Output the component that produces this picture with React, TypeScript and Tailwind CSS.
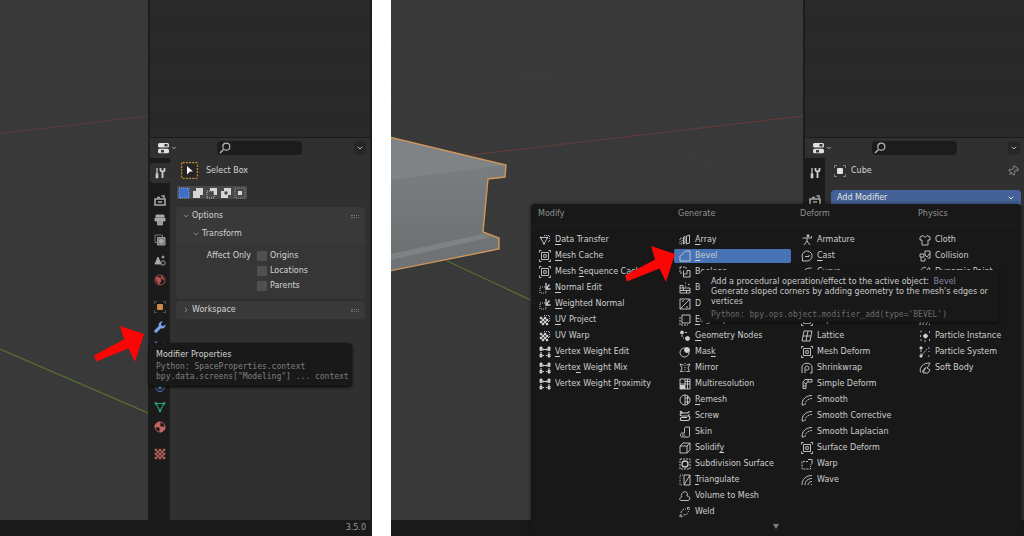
import React, { useState } from 'react';
import { ChevronDown, ChevronRight, Pin } from 'lucide-react';

const ICONS: Record<string, React.ReactNode> = {
  transfer: <><path d="M1.5 3.5h7L5 10z" /><path d="M5 1.5h5.5v6H9" strokeDasharray="1 1" /><path d="M.8 2.8h1.5v1.5H.8zM7.6 2.8h1.5v1.5H7.6zM4.2 9h1.6v1.6H4.2z" fill="currentColor" stroke="none" /></>,
  cache: <><path d="M2.5 2.5h7v7h-7zM4.7 4.7h2.6v2.6H4.7z" /><path d="M.5 2.5v-2h2M9.5.5h2v2M11.5 9.5v2h-2M2.5 11.5h-2v-2" /></>,
  normal: <><path d="M6 5H1v6h6V7.5" strokeDasharray="1 1" /><path d="M7 1v6h4.500M7 7l3.500-4.500" strokeWidth="1.300" /></>,
  uv: <><path d="M5 1.5h5.5v6H9" strokeDasharray="1 1" /><path d="M1 3h2v2H1zM5 3h2v2H5zM3 5h2v2H3zM7 5h2v2H7zM1 7h2v2H1zM5 7h2v2H5zM3 9h2v2H3zM7 9h2v2H7z" fill="currentColor" strokeWidth=".4" /></>,
  weight: <><path d="M1 1h2v3.500H1zM9 1h2v3.500H9zM1 8h2v3H1zM9 8h2v3H9z" fill="currentColor" /><path d="M3.500 3.500h5M4 2.500v2M8 2.500v2M2 6v1M10 6v1M4 9.500h1M7 9.500h1" strokeWidth="1.200" /></>,
  array: <><path d="M7.500 2l3-1v8l-3 1zM4.500 3l1.500-.5v7l-1.500.5z" /><path d="M1 4h2v6H1z" strokeDasharray="1 1" /></>,
  bevel: <path d="M1 11V6.5L6.500 1H11v10z" />,
  boolean: <><path d="M1 1h6v3M1 1v6h3" strokeDasharray="2 1" /><path d="M4.500 4.500V11H11V4.500H8V8H4.500" /></>,
  build: <><path d="M1 6h10v5H1zM1 8.500h10M4.500 6v2.500M7.500 8.500V11M1 6V3.500h3V6" /><path d="M6 1h1M9 2.500h1.500M6 4h1" /></>,
  decimate: <path d="M1 1h10v10H1zM1 11L11 1M3 3h2M7 9h2" />,
  edge: <><path d="M3 1h8v8H3z" /><path d="M1 3v8h8" strokeDasharray="2 1" /></>,
  nodes: <><circle cx="3" cy="2.500" r="1.500" fill="currentColor" /><circle cx="8.500" cy="8.500" r="2" fill="currentColor" /><path d="M2 6h2M6 2.500h2M4 8h1" /></>,
  mask: <><circle cx="5.500" cy="6.500" r="4.500" /><circle cx="8" cy="4" r="2.500" fill="currentColor" /></>,
  mirror: <><path d="M6 1v10" strokeDasharray="1 1" /><path d="M4.500 9.500h-3L3 6 1 2l3.500 1M7.500 3L11 2 9 6l1.500 3.500h-3" /></>,
  multires: <><path d="M1 1h10v10H1zM6 1v10M1 6h10M8.500 1v10M6 3.500h5" /><path d="M1 7h5v4H1z" fill="currentColor" stroke="none" /></>,
  remesh: <><circle cx="6" cy="6" r="5" /><path d="M6 1v10M6 4h4.500M6 8h4.500M8.500 2v8" /></>,
  screw: <path d="M10.500 1.500l-2 1.500H3C.5 1.500 1 .8 2 1.500l2 2M3 3c-2.500 0-2.500 3 0 3h6c2.500 0 2.500 4 0 4.500H3c-2.500 0-2-3 0-3h5M10.500 4L9 6" strokeWidth="1.100" />,
  skin: <path d="M7 1h3.500v8.500c0 1-.5 1.500-1.500 1.500H3C1 11 1 7 3 7h2.500V3c0-1.200.5-2 1.500-2zM3 9h3" />,
  solidify: <path d="M1 4h7v7H1zM1 4l3-3h7v7l-3 3M8 4l3-3" />,
  subdiv: <><path d="M1 1h10v10H1z" strokeDasharray="2 1" /><circle cx="6" cy="6" r="3" strokeWidth="1.300" /></>,
  triangulate: <><path d="M5 1h6v10H5zM5 11l6-10" /><path d="M4 1H1v10h3" strokeDasharray="1 1" /></>,
  volume: <path d="M2 10.500c-2-.5-1.500-3 .5-3.500C1.500 2 7 0 8.500 3.500L8 6c3 0 4 4 1 4.500z" />,
  weld: <path d="M1 9h2v2H1zM8.500 1.500h2v2h-2zM4.500 9c3 0 5-2 5-4M2 7c0-2 2-4 5-4" strokeDasharray="2 1" />,
  armature: <><circle cx="7" cy="1.800" r="1" fill="currentColor" /><path d="M1.500 4h9M6 4v3L3 11M6 7l3 4M10.500 4V2" /></>,
  cast: <path d="M1.500 8A5 5 0 116 11H1.500V8zM4 6.500h4V5" />,
  curve: <path d="M1.500 10C1 4 5 2 10.500 2M4 10c0-3 2-5 6.500-5" />,
  lattice: <path d="M3 1h8l-2 10H1zM7 1L5 11M2 6h8" />,
  shrink: <><path d="M1 11V5c0-5 10-5 10 0v6H9" /><path d="M4 11V6c0-2.500 4-2.500 4 0s-2 2-3 2" /></>,
  simple: <path d="M2 10.500V4L4 1.500h7V4H6.500L5 6v4.500zM5 6L3 4.500M7 1.500V4M2 8h3" />,
  smooth: <><path d="M1 11C1 5 5 1.500 11 1.500" /><path d="M4 11c0-3.500 2-6 7-6.500M1 11h3" strokeDasharray="2 1" /></>,
  warp: <><path d="M7 3.500H1V11h8.500V8" strokeDasharray="2 1" /><path d="M7 1.500h4v4L9.500 7" /></>,
  wave: <path d="M1 11C1 5 5 1.500 11 1.500M4 11c0-4 3-6.500 7-6.500M7 11c0-2 1.500-3.500 4-3.500M10 10.500h1" />,
  cloth: <path d="M4 1.500L1 3v3h2v5h6V6h2V3L8 1.500C7.500 3.500 4.500 3.500 4 1.500z" />,
  collision: <path d="M1 4h4v3H1zM2 7v4h4V8M6 1h5v7H8.500M6 1v4l2 2 3-4" />,
  paint: <path d="M1 11c0-3 1-4 4-4l5-5.500L11 3 7 8c0 2-2 3-6 3zM2 5c0-3 3-4 5-3.500" />,
  instance: <><path d="M4 6h5M6.500 3.500v5M5 4.500l3 3M8 4.500l-3 3" strokeWidth="1.400" /><path d="M1.500 1.500h1M1 6h1M1.500 10h1M10 2h1M10 10h1M5.500 11h1" strokeWidth="1.500" /></>,
  particles: <><path d="M1 1h2v2H1zM1 9h2v2H1zM9.500 5.500h1M9 10h1.500M9 2h1.500" fill="currentColor" /><path d="M3 9l5-6M2 4v4" strokeDasharray="2 1" /></>,
  soft: <path d="M1.500 10.500C0 5 4 1 11 1c-1 2-2 4-3 5l3 2-2 3H4L7 5M3 10l3-4" />,
  tool: <><path d="M3 1v5" strokeWidth="1.200" /><path d="M2.500 7h1v3.500h-1z" strokeWidth="1.600" /><path d="M6.500 1v2c0 2 4 2 4 0V1M8.500 4.500V11" strokeWidth="1.800" /></>,
  render: <><path d="M1 5h10v6H1z" strokeWidth="1.600" /><path d="M3 3.500h3M7.500 2h2.500v2M4 8h4" strokeWidth="1.500" /></>,
  output: <><path d="M2 1h8v2H2zM1 4h10v3H1z" fill="currentColor" /><path d="M3.500 7v4h5V7" fill="#999" /></>,
  layers: <><path d="M1 1h7.500v7.500H1z" opacity=".7" /><path d="M3.500 3.500H11V11H3.500z" fill="#777" /><circle cx="7.200" cy="7.200" r="2" fill="currentColor" /></>,
  scene: <><path d="M1 10L4 3l3 7z" fill="currentColor" /><circle cx="9" cy="9" r="2.200" /><circle cx="9" cy="3" r="1" fill="currentColor" /></>,
  world: <><circle cx="6" cy="6" r="5" /><path d="M2 3l4 1 1 3-2 3-2-3zM8 1.500L7 4l3 2" fill="currentColor" /></>,
  object: <><path d="M3.500 3.500h5v5h-5z" fill="currentColor" /><path d="M.5 3V.5H3M9 .5h2.500V3M11.500 9v2.500H9M3 11.500H.5V9" opacity=".5" /></>,
  wrench: <path d="M8.800.7a3.300 3.300 0 00-4 4.300L.8 9a1.500 1.500 0 002.200 2.200l4-4a3.300 3.300 0 004.300-4L9.300 5.200 7.500 4.500 6.800 2.700z" fill="currentColor" stroke="none" />,
  physics: <><circle cx="6" cy="6" r="4.500" /><circle cx="6" cy="6" r="2" fill="currentColor" /></>,
  mesh: <><path d="M2 2.500h8L6 10z" strokeWidth="1.200" /><path d="M.8 1.300h2.400v2.400H.8zM8.800 1.300h2.400v2.400H8.800zM4.800 8.600h2.400V11H4.800z" fill="currentColor" stroke="none" /></>,
  material: <><circle cx="6" cy="6" r="5" /><path d="M6 1v5H1a5 5 0 015-5zM6 6h5a5 5 0 01-5 5z" fill="currentColor" /></>,
  texture: <path d="M1 1h2v2H1zM5 1h2v2H5zM9 1h2v2H9zM3 3h2v2H3zM7 3h2v2H7zM1 5h2v2H1zM5 5h2v2H5zM9 5h2v2H9zM3 7h2v2H3zM7 7h2v2H7zM1 9h2v2H1zM5 9h2v2H5zM9 9h2v2H9z" fill="currentColor" strokeWidth=".5" />,
  search: <><circle cx="7.300" cy="4.700" r="3.500" strokeWidth="1.200" /><path d="M4.500 7.500L1 11" strokeWidth="1.500" /></>,
};

function Icon({ name }: { name: string }) {
  return (
    <svg viewBox="0 0 12 12" className="size-3 shrink-0" fill="none" stroke="currentColor" strokeWidth="0.9" aria-hidden="true">
      {ICONS[name]}
    </svg>
  );
}

// An underscore marks the shortcut letter of a menu entry
const MENU = [
  {
    title: 'Modify',
    items: [
      ['transfer', '_Data Transfer'], ['cache', '_Mesh Cache'], ['cache', 'Mesh _Sequence Cache'],
      ['normal', '_Normal Edit'], ['normal', '_Weighted Normal'], ['uv', '_UV Project'], ['uv', 'UV Warp'],
      ['weight', '_Vertex Weight Edit'], ['weight', 'Verte_x Weight Mix'], ['weight', 'Vertex Weight _Proximity'],
    ],
  },
  {
    title: 'Generate',
    items: [
      ['array', '_Array'], ['bevel', '_Bevel'], ['boolean', 'Boolean'], ['build', 'Build'], ['decimate', 'Decimate'],
      ['edge', '_Edge Split'], ['nodes', '_Geometry Nodes'], ['mask', 'Mas_k'], ['mirror', 'Mirror'],
      ['multires', 'Multiresolution'], ['remesh', '_Remesh'], ['screw', 'Screw'], ['skin', 'Skin'],
      ['solidify', 'Solidif_y'], ['subdiv', 'Subdivision Surface'], ['triangulate', '_Triangulate'],
      ['volume', 'Volume to Mesh'], ['weld', 'Weld'],
    ],
  },
  {
    title: 'Deform',
    items: [
      ['armature', 'Armature'], ['cast', '_Cast'], ['curve', 'Curve'], ['warp', 'Displace'], ['curve', 'Hook'],
      ['cache', 'Laplacian Deform'], ['lattice', 'Lattice'], ['cache', 'Mesh Deform'], ['shrink', 'Shrinkwrap'],
      ['simple', 'Simple Deform'], ['smooth', 'Smooth'], ['smooth', 'Smooth Corrective'],
      ['smooth', 'Smooth Laplacian'], ['cache', 'Surface Deform'], ['warp', 'Warp'], ['wave', 'Wave'],
    ],
  },
  {
    title: 'Physics',
    items: [
      ['cloth', 'Cloth'], ['collision', 'Collision'], ['paint', 'Dynamic Paint'], ['particles', 'Explode'],
      ['wave', 'Fluid'], ['wave', 'Ocean'], ['instance', 'Particle _Instance'], ['particles', 'Particle System'],
      ['soft', 'Soft Body'],
    ],
  },
];

const TAB_GROUPS = [
  [{ name: 'Tool', icon: 'tool', color: 'text-[#d0d0d0]' }],
  [
    { name: 'Render', icon: 'render', color: 'text-[#a8a8a8]' },
    { name: 'Output', icon: 'output', color: 'text-[#a8a8a8]' },
    { name: 'View Layer', icon: 'layers', color: 'text-[#a8a8a8]' },
    { name: 'Scene', icon: 'scene', color: 'text-[#a8a8a8]' },
    { name: 'World', icon: 'world', color: 'text-[#b45252]' },
  ],
  [
    { name: 'Object', icon: 'object', color: 'text-[#d08c47]' },
    { name: 'Modifiers', icon: 'wrench', color: 'text-[#7ea2ee]' },
    { name: 'Particles', icon: 'particles', color: 'text-[#5379b8]' },
    { name: 'Physics', icon: 'physics', color: 'text-[#5379b8]' },
    { name: 'Constraints', icon: 'physics', color: 'text-[#5379b8]' },
    { name: 'Data', icon: 'mesh', color: 'text-[#1fa077]' },
    { name: 'Material', icon: 'material', color: 'text-[#c26464]' },
  ],
  [{ name: 'Texture', icon: 'texture', color: 'text-[#b35c5c]' }],
];

const SELECT_MODES = [
  { name: 'Set', shape: <path d="M1 1h10v10H1z" fill="#3f6fc4" stroke="#7ba3ea" strokeDasharray="1 1" /> },
  { name: 'Extend', shape: <path d="M4 1h7v7H8v3H1V4h3z" fill="#d6d6d6" stroke="none" /> },
  { name: 'Subtract', shape: <><path d="M1 4h7v7H1z" strokeDasharray="1 1" /><path d="M4 1h7v7H8V4H4z" fill="#d6d6d6" stroke="none" /></> },
  { name: 'Difference', shape: <path d="M4 1h7v7H8v3H1V4h3zM4.500 4.500v3h3v-3z" fill="#d6d6d6" fillRule="evenodd" stroke="none" /> },
  { name: 'Intersect', shape: <><path d="M1 1h10v10H1z" strokeDasharray="1 1" opacity=".6" /><path d="M4 4h4v4H4z" fill="#d6d6d6" stroke="none" /></> },
];

function Tabs({ active }: { active?: string }) {
  return (
    <nav className="flex w-5 shrink-0 flex-col gap-[7px] bg-[#1b1b1b] pt-[5px]">
      {TAB_GROUPS.map((group, i) => (
        <div key={i}>
          {group.map((tab) => (
            <button
              key={tab.name}
              aria-label={tab.name}
              className={`flex h-5 w-full items-center justify-center rounded-l ${tab.color} ${active === tab.name ? 'bg-[#303030]' : ''}`}
            >
              <Icon name={tab.icon} />
            </button>
          ))}
        </div>
      ))}
    </nav>
  );
}

function Sidebar({ className, activeTab, children }: { className: string; activeTab?: string; children: React.ReactNode }) {
  return (
    <aside className={`flex shrink-0 flex-col overflow-hidden border-l-2 border-[#1c1c1c] bg-[#303030] ${className}`}>
      {/* Outliner rows */}
      <div className="h-[138px] shrink-0 border-b border-[#1a1a1a] bg-[repeating-linear-gradient(#2a2a2a_0_16px,#282828_16px_32px)]" />
      <header className="flex h-5 shrink-0 items-center pr-1 pl-[7px]">
        <button aria-label="Editor type" className="flex w-[60px] items-center gap-px text-[#c8c8c8]">
          <svg viewBox="0 0 13 12" className="h-3 w-[13px]" aria-hidden="true">
            <rect x="1" y="1" width="11" height="4.500" rx="1.500" fill="#e0e0e0" />
            <rect x="1" y="6.800" width="11" height="4.500" rx="1.500" fill="#e0e0e0" />
            <path d="M7.500 2h3v2.500h-3zM4 8h3v2.500H4z" fill="#383838" />
          </svg>
          <ChevronDown className="size-1.5" strokeWidth={3} />
        </button>
        <label className="flex h-3.5 w-[85px] items-center rounded-sm bg-[#1c1c1c] px-0.5 text-[#b4b4b4]">
          <Icon name="search" />
          <input type="search" aria-label="Search properties" className="w-full min-w-0 bg-transparent px-1 outline-none" />
        </label>
        <button aria-label="Options" className="ml-auto flex h-3.5 w-3 items-center justify-center rounded-sm bg-[#262626] text-[#b4b4b4]">
          <ChevronDown className="size-2" strokeWidth={3} />
        </button>
      </header>
      <div className="flex min-h-0 flex-1">
        <Tabs active={activeTab} />
        <div className="min-w-0 flex-1 pt-1 pr-[5px] pl-1.5">{children}</div>
      </div>
    </aside>
  );
}

function Grip() {
  return <span className="ml-auto h-[3px] w-2 border-y border-dotted border-[#777]" />;
}

function ToolPanel() {
  return (
    <>
      <div className="flex h-[17px] items-center gap-2 pl-[5px]">
        <svg viewBox="0 0 17 17" className="size-[17px]" aria-hidden="true">
          <rect x="0.700" y="0.700" width="15.600" height="15.600" rx="1" fill="#252525" stroke="#c98f35" strokeWidth="1.200" strokeDasharray="2 1.200" />
          <path d="M6 4l6 5.500H9L6 12.500z" fill="#fff" />
        </svg>
        <span>Select Box</span>
      </div>
      <div className="mt-[7px] flex h-[13px] pl-px">
        {SELECT_MODES.map((mode) => (
          <button key={mode.name} aria-label={mode.name} className="flex h-[13px] w-3.5 items-center justify-center bg-[#484848]">
            <svg viewBox="0 0 12 12" className="size-3" fill="none" stroke="#c0c0c0" aria-hidden="true">{mode.shape}</svg>
          </button>
        ))}
      </div>
      <section className="mt-2 rounded-sm bg-[#363636] pb-1.5">
        <button className="flex h-[18px] w-full items-center gap-0.5 rounded-t-sm bg-[#393939] px-1.5">
          <ChevronDown className="size-2 text-[#aaa]" />
          Options
          <Grip />
        </button>
        <button className="flex h-[18px] w-full items-center gap-0.5 bg-[#393939] px-4">
          <ChevronDown className="size-2 text-[#aaa]" />
          Transform
        </button>
        <div role="group" aria-labelledby="affect-only" className="flex pt-[5px]">
          <span id="affect-only" className="w-[81px] pr-1.5 text-right leading-[15px]">Affect Only</span>
          <div>
            {['Origins', 'Locations', 'Parents'].map((label) => (
              <label key={label} className="flex h-[15px] items-center gap-[3px]">
                <input type="checkbox" className="size-2.5 appearance-none rounded-[1px] bg-[#505050] checked:bg-[#4772b3]" />
                {label}
              </label>
            ))}
          </div>
        </div>
      </section>
      <button className="mt-0.5 flex h-[18px] w-full items-center gap-0.5 rounded-sm bg-[#393939] px-1.5">
        <ChevronRight className="size-2 text-[#aaa]" />
        Workspace
        <Grip />
      </button>
    </>
  );
}

function MenuLabel({ text }: { text: string }) {
  const [before, after] = text.split('_');
  if (after === undefined) return <span>{text}</span>;
  return (
    <span>
      {before}
      <u className="underline-offset-2">{after[0]}</u>
      {after.slice(1)}
    </span>
  );
}

function ModifierMenu() {
  const [current, setCurrent] = useState('_Bevel');
  return (
    <div className="absolute top-[204px] right-[3px] bottom-0 w-[490px] rounded-t-sm bg-[#181818] text-[#cecece] shadow-[0_0_4px_#0008]">
      <div className="grid grid-cols-[140px_122px_118px_1fr]">
        {MENU.map((column) => (
          <section key={column.title}>
            <h2 className="h-[22px] border-b border-[#1f1f1f] pl-[7px] leading-[20px] text-[#909090]">{column.title}</h2>
            <ul className="pt-1.5 pr-0.5 pl-[3px]">
              {column.items.map(([icon, label]) => (
                <li key={label} className="py-px">
                  <button
                    onClick={() => setCurrent(label)}
                    className={`flex h-3.5 w-full items-center gap-1 rounded-xs pl-[5px] whitespace-nowrap ${current === label ? 'bg-[#4772b3]' : ''}`}
                  >
                    <Icon name={icon} />
                    <MenuLabel text={label} />
                  </button>
                </li>
              ))}
            </ul>
          </section>
        ))}
      </div>
      <svg viewBox="0 0 6 5" className="mx-auto mt-1 h-[5px] w-1.5" aria-hidden="true"><path d="M0 0h6L3 5z" fill="#808080" /></svg>

      <div role="tooltip" className="absolute top-[66px] left-[170px] w-[298px] rounded-sm bg-[#181818] px-2.5 pt-[7px] pb-0.5 leading-[10px] text-[#cacaca] shadow-[0_1px_3px_#0008]">
        <p className="whitespace-nowrap">Add a procedural operation/effect to the active object: <span className="pl-0.5 text-[#8088a8]">Bevel</span></p>
        <p>Generate sloped corners by adding geometry to the mesh's edges or vertices</p>
        <p className="mt-[3px] font-['DejaVu_Sans_Mono',monospace] text-[#6a6a6a]">Python: bpy.ops.object.modifier_add(type='BEVEL')</p>
      </div>
    </div>
  );
}

function Arrow({ className }: { className: string }) {
  return (
    <svg viewBox="0 0 52 38" className={`absolute h-[38px] w-[52px] ${className}`} aria-hidden="true">
      <path d="M1 30.500L31 14.500 27 1 51 9 42 37 35.500 23.500 3 36.500z" fill="#fb0505" />
    </svg>
  );
}

export default function App() {
  return (
    <main className="grid h-screen grid-cols-[372fr_19px_633fr] overflow-hidden bg-white font-['DejaVu_Sans',sans-serif] text-[8px] text-[#d4d4d4]">
      <section className="relative flex min-w-0 flex-col overflow-hidden">
        <div className="flex min-h-0 flex-1">
          <div className="min-w-0 flex-1 bg-[#393939]">
            <svg viewBox="0 0 148 520" preserveAspectRatio="none" className="size-full" fill="none" aria-hidden="true">
              <path d="M0 94l148-36M0 82l148 18M0 170l148-52M0 190l148-45M0 120l148 80" stroke="#3d3d3d" />
              <path d="M0 133.500L148 116" stroke="#603a3b" />
              <path d="M0 349l148 64" stroke="#59702f" strokeWidth="1.200" />
            </svg>
          </div>
          <Sidebar className="w-[224px] border-r-2" activeTab="Tool">
            <ToolPanel />
          </Sidebar>
        </div>
        <footer className="h-4 shrink-0 bg-[#1a1a1a] pr-1.5 text-right leading-4 text-[#999]">3.5.0</footer>
        <div role="tooltip" className="absolute top-[343px] right-5 w-[203px] rounded-sm bg-[#191919] px-[7px] pt-[7px] pb-1 leading-[10px] whitespace-nowrap shadow-[0_1px_3px_#000]">
          <p>Modifier Properties</p>
          <p className="mt-0.5 font-['DejaVu_Sans_Mono',monospace] text-[#808080]">Python: SpaceProperties.context<br />bpy.data.screens["Modeling"] ... context</p>
        </div>
        <Arrow className="top-[325px] right-[227px]" />
      </section>

      <div />

      <section className="relative flex min-w-0 flex-col overflow-hidden">
        <div className="flex min-h-0 flex-1">
          <div className="min-w-0 flex-1 bg-[#393939]">
            <svg viewBox="0 0 412 520" preserveAspectRatio="none" className="size-full" fill="none" aria-hidden="true">
              <path d="M0 45l412 90M0 85l412 100M120 190l292-60M0 40l412-35M110 210l302-70M0 100l412-65" stroke="#3d3d3d" />
              <path d="M80 155l332-39" stroke="#683b3b" />
              <path d="M56 261l90 42" stroke="#59702f" strokeWidth="1.200" />
              <path d="M-2 137l117 28-1 12-17 2-5 53 16 6v11L-2 271z" fill="url(#side)" />
              <path d="M0 137l115 28-8 1L0 180z" fill="#7f8386" />
              <path d="M0 256l92-22 16 6v9L0 270z" fill="#707375" />
              <path d="M0 254l92-20 8 3L0 260z" fill="#7f8285" />
              <path d="M-2 137l117 28-1 12-17 2-5 53 16 6v11L-2 271z" stroke="#d0965a" strokeWidth="1.400" />
              <defs>
                <linearGradient id="side" x1="0" y1="0" x2="0" y2="1">
                  <stop stopColor="#7d8184" />
                  <stop offset="1" stopColor="#6c6f70" />
                </linearGradient>
              </defs>
            </svg>
          </div>
          <Sidebar className="w-[221px]">
            <div className="flex h-[17px] items-center gap-[5px] pl-[3px]">
              <span className="text-[#e4e4e4]"><Icon name="object" /></span>
              <span>Cube</span>
              <button aria-label="Pin" className="ml-auto"><Pin className="size-3 rotate-45 text-[#808080]" strokeWidth={2} /></button>
            </div>
            <button className="mt-[11px] flex h-[15px] w-[calc(100%+2px)] items-center justify-between rounded-t-sm bg-[#446299] px-1.5 text-[#e4e4e4]">
              Add Modifier
              <ChevronDown className="size-2" strokeWidth={3} />
            </button>
          </Sidebar>
        </div>
        <footer className="h-4 shrink-0 bg-[#1a1a1a]" />
        <ModifierMenu />
        <Arrow className="top-[245px] right-[348px]" />
      </section>
    </main>
  );
}
